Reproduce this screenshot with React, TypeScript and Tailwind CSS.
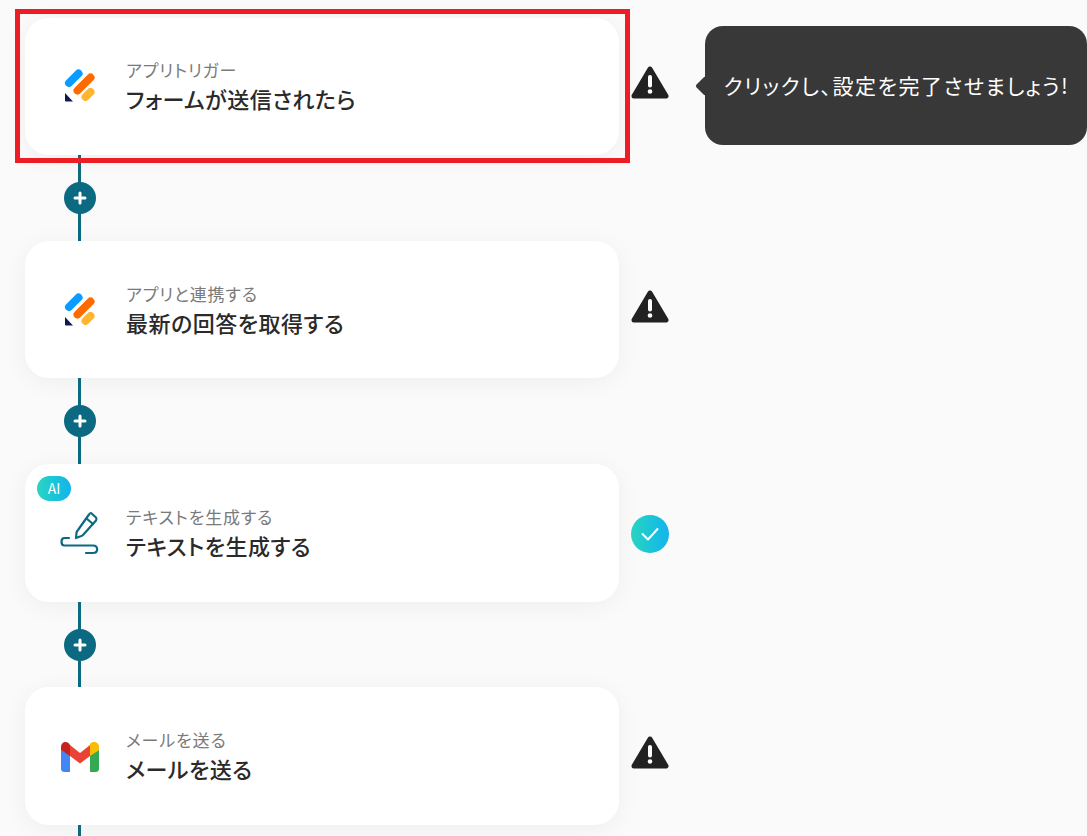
const FONT = "font-['Noto_Sans_CJK_JP','Noto_Sans',sans-serif] [font-feature-settings:'palt']";

function FormIcon() {
  return (
    <svg width="32" height="34" viewBox="0 0 32 34" fill="none">
      <line x1="5" y1="14" x2="14.500" y2="4.500" stroke="#0a9cff" strokeWidth="8" strokeLinecap="round" />
      <line x1="13.500" y1="21.500" x2="26.500" y2="8.500" stroke="#ff6a00" strokeWidth="8" strokeLinecap="round" />
      <line x1="21.500" y1="28" x2="26.500" y2="23" stroke="#ffb62e" strokeWidth="8" strokeLinecap="round" />
      <path d="M1 24 L9 32.500 L1.800 32.500 Q1 32.500 1 31.500 Z" fill="#0e1a56" />
    </svg>
  );
}

function PenIcon() {
  return (
    <svg width="40" height="44" viewBox="0 0 40 44" fill="none" stroke="#0b6a82" strokeWidth="2.200" strokeLinecap="round" strokeLinejoin="round">
      <path d="M31 2 L36 6.500 Q37 8 36 9.500 L23 24 Q22 25 20 25.500 L16 27 L16.500 22 Q16.500 20.500 18 19 L29 3.500 Q30 2 31 2 Z" />
      <line x1="26.500" y1="7.500" x2="33" y2="13" />
      <path d="M9 27 L4.500 27 C0.500 27 0.500 34.500 4.500 34.500 L33 34.500 C38.500 34.500 38.500 42 33 42 L26 42" />
    </svg>
  );
}

function GmailIcon() {
  return (
    <svg className="translate-y-[1px]" width="38" height="30" viewBox="0 0 38 30" fill="none">
      <path d="M0 8 L0 26.500 Q0 30 3.500 30 L9 30 L9 13 Z" fill="#4285f4" />
      <path d="M29 13 L29 30 L34.500 30 Q38 30 38 26.500 L38 8 Z" fill="#34a853" />
      <path d="M29 3 L29 14 L38 8 L38 5 C38 0 32 -1.500 29 2 Z" fill="#fbbc04" />
      <path d="M9 14 L9 3 L19 11 L29 3 L29 14 L19 21.500 Z" fill="#ea4335" />
      <path d="M0 5 L0 8 L9 14 L9 3 L8 1.500 C5 -1.500 0 0 0 5 Z" fill="#c5221f" />
    </svg>
  );
}

function Warning() {
  return (
    <svg className="-translate-y-[3px]" width="38" height="34" viewBox="0 0 38 34">
      <path d="M19 3 L35 30 L3 30 Z" fill="#222222" stroke="#222222" strokeWidth="5" strokeLinejoin="round" />
      <rect x="17" y="9" width="4" height="12.500" rx="2" fill="#ffffff" />
      <circle cx="19" cy="25.500" r="2.300" fill="#ffffff" />
    </svg>
  );
}

function Done() {
  return (
    <div className="flex h-[38px] w-[38px] translate-y-[1px] items-center justify-center rounded-full bg-gradient-to-r from-[#2ad4c0] to-[#14b4ec]">
      <svg width="18" height="14" viewBox="0 0 18 14" fill="none" stroke="#ffffff" strokeWidth="2" strokeLinecap="round" strokeLinejoin="round">
        <path d="M1.500 7 L7 12.500 L16.500 2" />
      </svg>
    </div>
  );
}

function Connector() {
  return (
    <div className="relative flex h-[85.83px] w-[110px] items-center justify-center">
      <div className="absolute left-[53px] top-0 h-full w-[3px] bg-[#0b6a82]" />
      <div className="relative flex h-8 w-8 items-center justify-center rounded-full bg-[#0b6a82]">
        <svg width="14" height="14" viewBox="0 0 14 14" stroke="#ffffff" strokeWidth="3" strokeLinecap="round">
          <path d="M7 2 V12 M2 7 H12" />
        </svg>
      </div>
    </div>
  );
}

type StepProps = {
  icon: React.ReactNode;
  label: string;
  title: string;
  status: React.ReactNode;
  ai?: boolean;
};

function Step({ icon, label, title, status, ai }: StepProps) {
  return (
    <div className="flex items-center">
      <div className="relative flex h-[137.500px] w-[594px] items-center rounded-[24px] bg-white pl-[35px] shadow-[0_4px_24px_rgba(0,0,0,0.05)]">
        {ai && (
          <span className="absolute left-3 top-[12px] flex h-[25px] w-[34px] items-center justify-center rounded-full bg-gradient-to-r from-[#2ad4c0] to-[#14b4ec] text-[14px] text-white">
            AI
          </span>
        )}
        <div className="flex w-[40px] justify-center">{icon}</div>
        <div className="ml-[26px]">
          <p className="text-[17px] leading-[22px] tracking-[0.85px] text-[#7a7a7a]">{label}</p>
          <p className="mt-[2px] text-[22px] font-medium leading-[30px] tracking-[0.5px] text-[#2a2a2a]">{title}</p>
        </div>
      </div>
      <div className="ml-3 flex w-[38px] justify-center">{status}</div>
    </div>
  );
}

export default function App() {
  return (
    <div className={`relative h-[836px] w-full overflow-hidden bg-[#fafafa] pl-[25px] pt-[17.500px] ${FONT}`}>
      <Step icon={<FormIcon />} label="アプリトリガー" title="フォームが送信されたら" status={<Warning />} />
      <Connector />
      <Step icon={<FormIcon />} label="アプリと連携する" title="最新の回答を取得する" status={<Warning />} />
      <Connector />
      <Step icon={<PenIcon />} label="テキストを生成する" title="テキストを生成する" status={<Done />} ai />
      <Connector />
      <Step icon={<GmailIcon />} label="メールを送る" title="メールを送る" status={<Warning />} />
      <Connector />

      <div className="pointer-events-none absolute left-[15px] top-[9px] h-[154px] w-[615px] border-[5px] border-[#ee1c25]" />

      <div className="absolute left-[705px] top-[26px] flex h-[119px] w-[382px] items-center rounded-[18px] bg-[#383838] pl-[18.500px] text-[21px] tracking-[1.550px] whitespace-nowrap text-white">
        <span className="absolute -left-[7px] top-[53px] h-[14px] w-[14px] rotate-45 rounded-[2px] bg-[#383838]" />
        <span className="relative">クリックし、設定を完了させましょう!</span>
      </div>
    </div>
  );
}
